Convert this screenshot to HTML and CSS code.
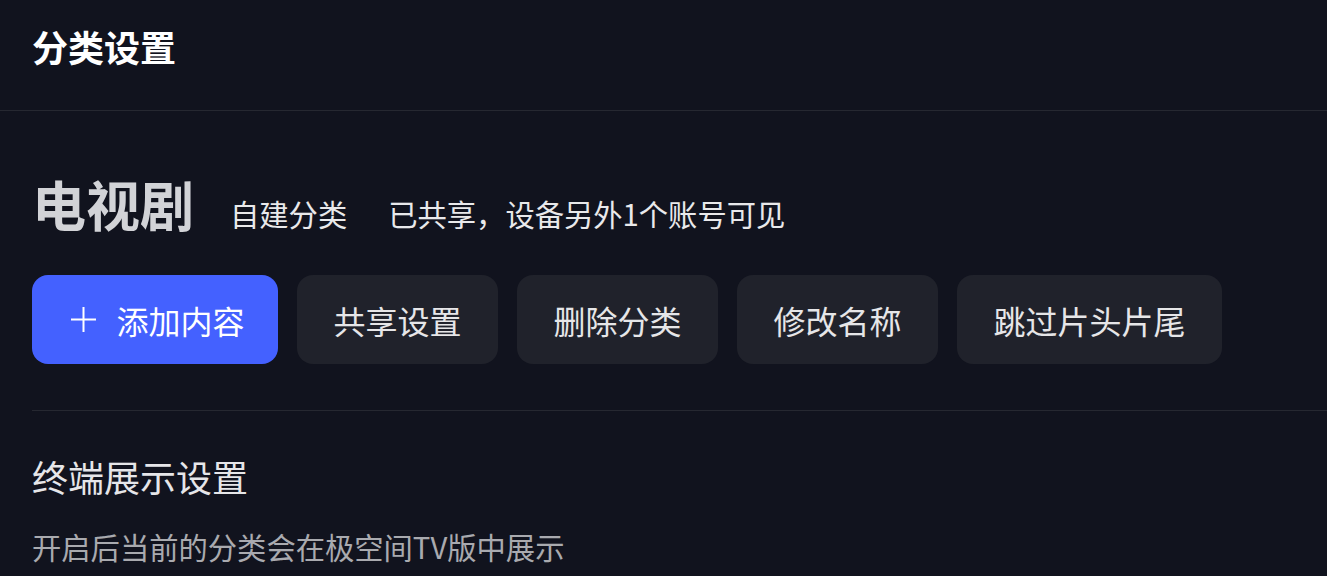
FILE: index.html
```html
<!DOCTYPE html>
<html lang="zh-CN">
<head>
<meta charset="utf-8">
<title>分类设置</title>
<link rel="stylesheet" href="styles.css">
</head>
<body>
<div class="page">
  <header class="header">
    <h1 class="header-title">分类设置</h1>
  </header>
  <main class="content">
    <div class="cat-row">
      <h2 class="cat-name">电视剧</h2>
      <span class="cat-meta cat-type">自建分类</span>
      <span class="cat-meta cat-share">已共享，设备另外1个账号可见</span>
    </div>
    <div class="actions">
      <button class="btn btn-primary" type="button">
        <svg class="btn-icon" viewBox="0 0 27 27" width="27" height="27" aria-hidden="true">
          <path d="M13.5 1 V26 M1 13.5 H26" stroke="#ffffff" stroke-width="2" fill="none"/>
        </svg>
        <span>添加内容</span>
      </button>
      <button class="btn" type="button">共享设置</button>
      <button class="btn" type="button">删除分类</button>
      <button class="btn" type="button">修改名称</button>
      <button class="btn" type="button">跳过片头片尾</button>
    </div>
    <section class="section">
      <h3 class="section-title">终端展示设置</h3>
      <p class="section-desc">开启后当前的分类会在极空间TV版中展示</p>
    </section>
  </main>
</div>
</body>
</html>
```

FILE: styles.css
```css
* {
  box-sizing: border-box;
}

html, body {
  margin: 0;
  padding: 0;
  background: #11131e;
}

body {
  font-family: "Noto Sans CJK SC", "Noto Sans", sans-serif;
  color: #e8e8ea;
  overflow: hidden;
}

.page {
  width: 1327px;
  height: 576px;
  background: #11131e;
}

.header {
  padding: 28px 32px 46px;
  border-bottom: 1px solid #262831;
}

.header-title {
  margin: 0;
  font-size: 36px;
  line-height: 36px;
  font-weight: 700;
  color: #ffffff;
}

.content {
  padding-left: 32px;
}

.cat-row {
  display: flex;
  align-items: flex-end;
  margin-top: 66px;
}

.cat-name {
  margin: 0;
  font-size: 54px;
  line-height: 54px;
  font-weight: 700;
  color: #d2d3d7;
}

.cat-meta {
  font-size: 29.3px;
  line-height: 29px;
  color: #e9e9eb;
  margin-bottom: 3px;
}

.cat-type {
  margin-left: 36px;
}

.cat-share {
  margin-left: 41px;
}

.actions {
  display: flex;
  gap: 19px;
  margin-top: 44px;
  padding-bottom: 46px;
  border-bottom: 1px solid #262831;
}

.btn {
  display: flex;
  align-items: center;
  height: 89px;
  padding: 0 36.5px;
  border: none;
  border-radius: 16px;
  background: #20222b;
  color: #e6e6e8;
  font-family: inherit;
  font-size: 32px;
  line-height: 32px;
  cursor: pointer;
}

.btn-primary {
  background: #4461ff;
  color: #ffffff;
  padding: 0 33.5px 0 38px;
  gap: 19.5px;
}

.btn-icon {
  display: block;
  flex: none;
}

.section {
  padding-top: 47px;
}

.section-title {
  margin: 0;
  font-size: 36px;
  line-height: 36px;
  font-weight: 400;
  color: #e6e6e9;
}

.section-desc {
  margin: 38px 0 0;
  font-size: 29.3px;
  line-height: 29px;
  color: #a9aaaf;
}
```
